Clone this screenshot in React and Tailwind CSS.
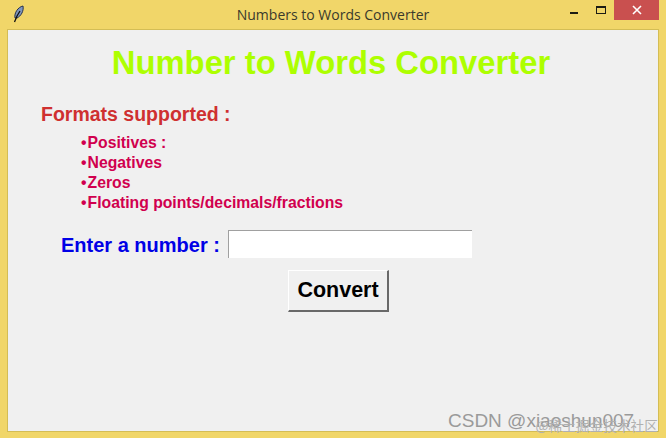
function Feather() {
  return (
    <svg width="12" height="18" viewBox="0 0 12 18" className="shrink-0">
      <path d="M2 13 C1 8 5 2 10 1 C11 6 8 11 4 13 Z" fill="#7f96bd" stroke="#27304a" strokeWidth="1" />
      <path d="M1.5 17 L4 11 L7 6" fill="none" stroke="#111" strokeWidth="1.3" />
    </svg>
  );
}

const formats = ["Positives :", "Negatives", "Zeros", "Floating points/decimals/fractions"];

export default function App() {
  return (
    <div className="w-[666px] h-[438px] bg-[#f1d669] flex flex-col overflow-hidden font-['Liberation_Sans',Arial,sans-serif]">
      {/* title bar */}
      <div className="h-[29px] shrink-0 flex items-start relative">
        <div className="pl-[13px] pt-[5px]">
          <Feather />
        </div>
        <div className="absolute left-0 right-0 top-[7px] text-center text-[14px] leading-[16px] text-[#3a3a2c] font-['Open_Sans',sans-serif]">
          Numbers to Words Converter
        </div>
        <div className="ml-auto flex items-start mr-[7px] relative">
          <div className="w-[45px] h-[20px] flex justify-end pr-[18px] items-start">
            <div className="w-[8px] h-[2px] mt-[12px] bg-[#1c1c14]" />
          </div>
          <div className="w-[18px] h-[20px] flex justify-start items-start">
            <div className="w-[10px] h-[8px] mt-[6px] border border-[#1c1c14] border-t-2" />
          </div>
          <div className="w-[45px] h-[20px] bg-[#c9504f] flex items-center justify-center">
            <svg width="10" height="10" viewBox="0 0 10 10">
              <path d="M1 1 L9 9 M9 1 L1 9" stroke="#fff" strokeWidth="1.6" />
            </svg>
          </div>
        </div>
      </div>

      {/* client area */}
      <div className="flex-1 mx-[7px] mb-[6px] bg-[#f0f0f0] border border-[#d4bd55] relative flex flex-col">
        <h1 className="text-center text-[32.8px] leading-[38px] font-bold text-[#adff00] mt-[14px] pr-[4px]">
          Number to Words Converter
        </h1>
        <div className="ml-[33px] mt-[20px] text-[19.5px] leading-[24px] font-bold text-[#cf3030]">
          Formats supported :
        </div>
        <ul className="ml-[73px] mt-[7px] text-[15.75px] leading-[20px] font-bold text-[#d1004e]">
          {formats.map((f) => (
            <li key={f}>
              <span className="mr-px">•</span>
              {f}
            </li>
          ))}
        </ul>
        <div className="flex items-center mt-[16px] ml-[53px]">
          <span className="mt-[2px] text-[20px] leading-[28px] font-bold text-[#0000e6]">Enter a number :</span>
          <input className="ml-[8px] w-[244px] h-[28px] bg-white border-t border-l border-[#a0a0a0] outline-none" />
        </div>
        <div className="flex mt-[11px] ml-[280px]">
          <button className="w-[101px] h-[42px] bg-[#f0f0f0] border border-t-white border-l-white border-r-[#696969] border-b-[#696969] border-r-2 border-b-2 text-[21.5px] font-bold text-black">
            Convert
          </button>
        </div>
        <div className="absolute left-[440px] top-[380px] text-[19px] leading-[22px] text-[#9a9a9a] whitespace-nowrap">
          CSDN @xiaoshun007
        </div>
        <div className="absolute right-0 top-[387px] text-[13.7px] leading-[16px] text-[#b0b0b0] whitespace-nowrap font-['Noto_Sans_CJK_SC',sans-serif]">
          @稀土掘金技术社区
        </div>
      </div>
    </div>
  );
}
